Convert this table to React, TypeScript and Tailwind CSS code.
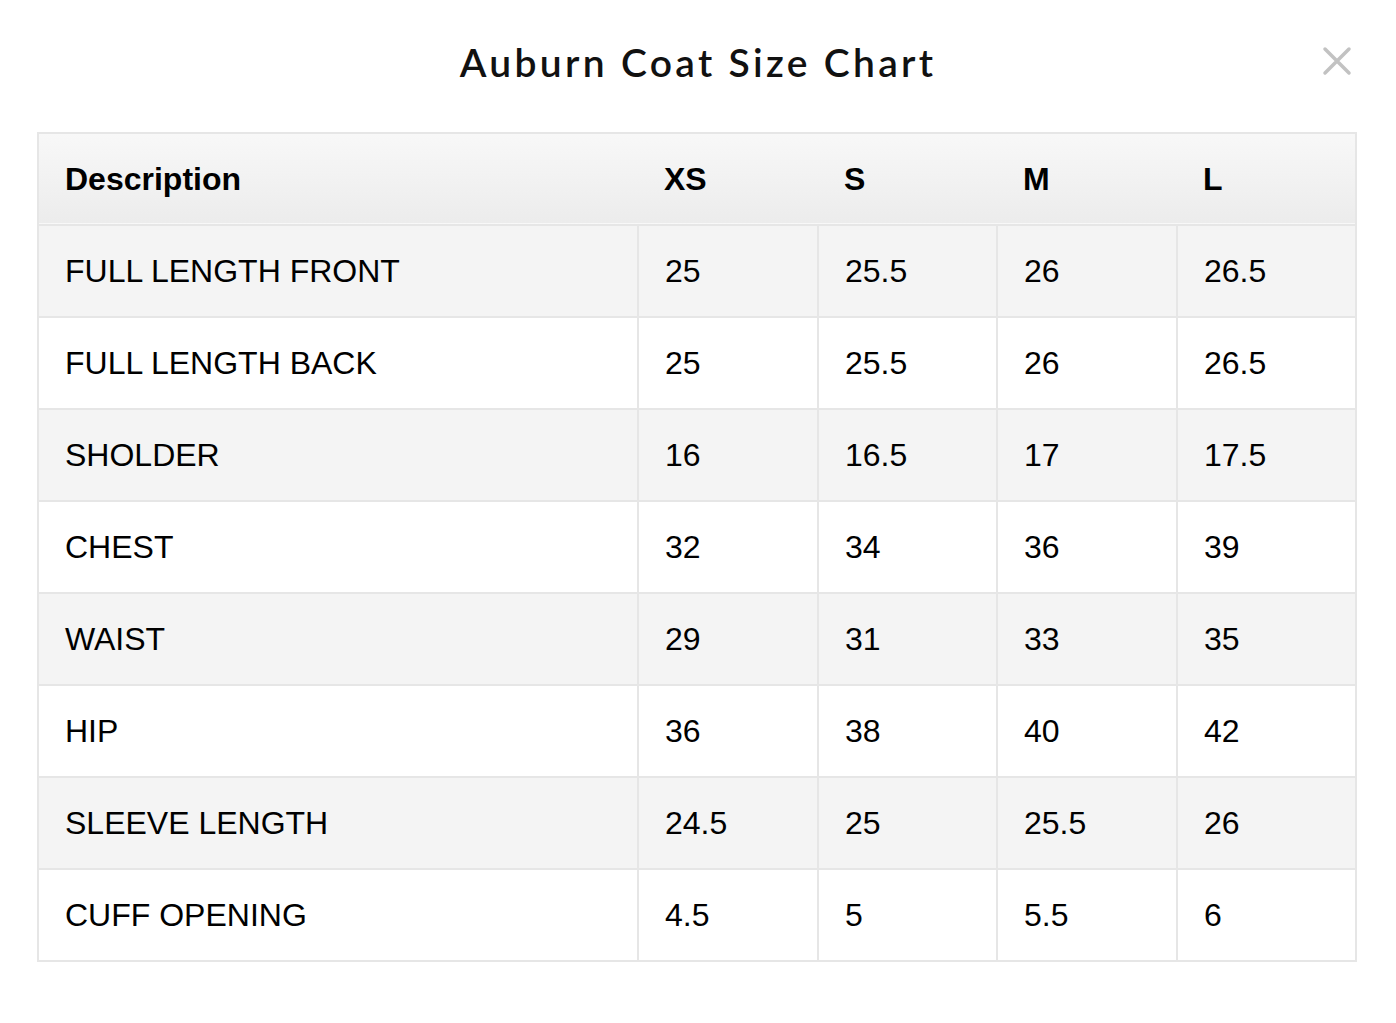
import React from 'react';

const sizes = ['XS', 'S', 'M', 'L'];

const rows: [string, string[]][] = [
  ['FULL LENGTH FRONT', ['25', '25.5', '26', '26.5']],
  ['FULL LENGTH BACK', ['25', '25.5', '26', '26.5']],
  ['SHOLDER', ['16', '16.5', '17', '17.5']],
  ['CHEST', ['32', '34', '36', '39']],
  ['WAIST', ['29', '31', '33', '35']],
  ['HIP', ['36', '38', '40', '42']],
  ['SLEEVE LENGTH', ['24.5', '25', '25.5', '26']],
  ['CUFF OPENING', ['4.5', '5', '5.5', '6']],
];

const App = () => {
  return (
    <div className="min-h-screen bg-white text-black">
      {/* Title bar */}
      <div className="relative h-[132px] flex items-center justify-center">
        <h1 className="font-['Lato',sans-serif] text-[39px] font-semibold tracking-[0.085em] text-[#111] -mt-[8px]">
          Auburn Coat Size Chart
        </h1>
        <button className="absolute right-[44px] top-[46px] text-[#c2c2c2]" aria-label="Close">
          <svg width="30" height="30" viewBox="0 0 30 30" fill="none" stroke="currentColor" strokeWidth="3.5" strokeLinecap="round">
            <path d="M3 3L27 27M27 3L3 27" />
          </svg>
        </button>
      </div>

      {/* Size table */}
      <div className="ml-[37px] mr-[39px]">
        <table className="w-full table-fixed border-collapse border-2 border-[#e6e6e6] font-['Liberation_Sans',Arial,sans-serif] text-[32px]">
          <colgroup>
            <col className="w-[600px]" />
            <col className="w-[180px]" />
            <col className="w-[179px]" />
            <col className="w-[180px]" />
            <col className="w-[179px]" />
          </colgroup>
          <thead>
            <tr className="h-[92px] bg-gradient-to-b from-[#f8f8f8] to-[#ececec] border-b-2 border-[#e6e6e6]">
              <th className="text-left font-bold pl-[26px]">Description</th>
              {sizes.map((s) => (
                <th key={s} className="text-left font-bold pl-[26px]">{s}</th>
              ))}
            </tr>
          </thead>
          <tbody>
            {rows.map(([label, vals], i) => (
              <tr key={label} className={`h-[92px] ${i % 2 === 0 ? 'bg-[#f4f4f4]' : 'bg-white'}`}>
                <td className="border-2 border-[#e6e6e6] pl-[26px] font-normal">{label}</td>
                {vals.map((v, j) => (
                  <td key={j} className="border-2 border-[#e6e6e6] pl-[26px]">{v}</td>
                ))}
              </tr>
            ))}
          </tbody>
        </table>
      </div>
    </div>
  );
};

export default App;
